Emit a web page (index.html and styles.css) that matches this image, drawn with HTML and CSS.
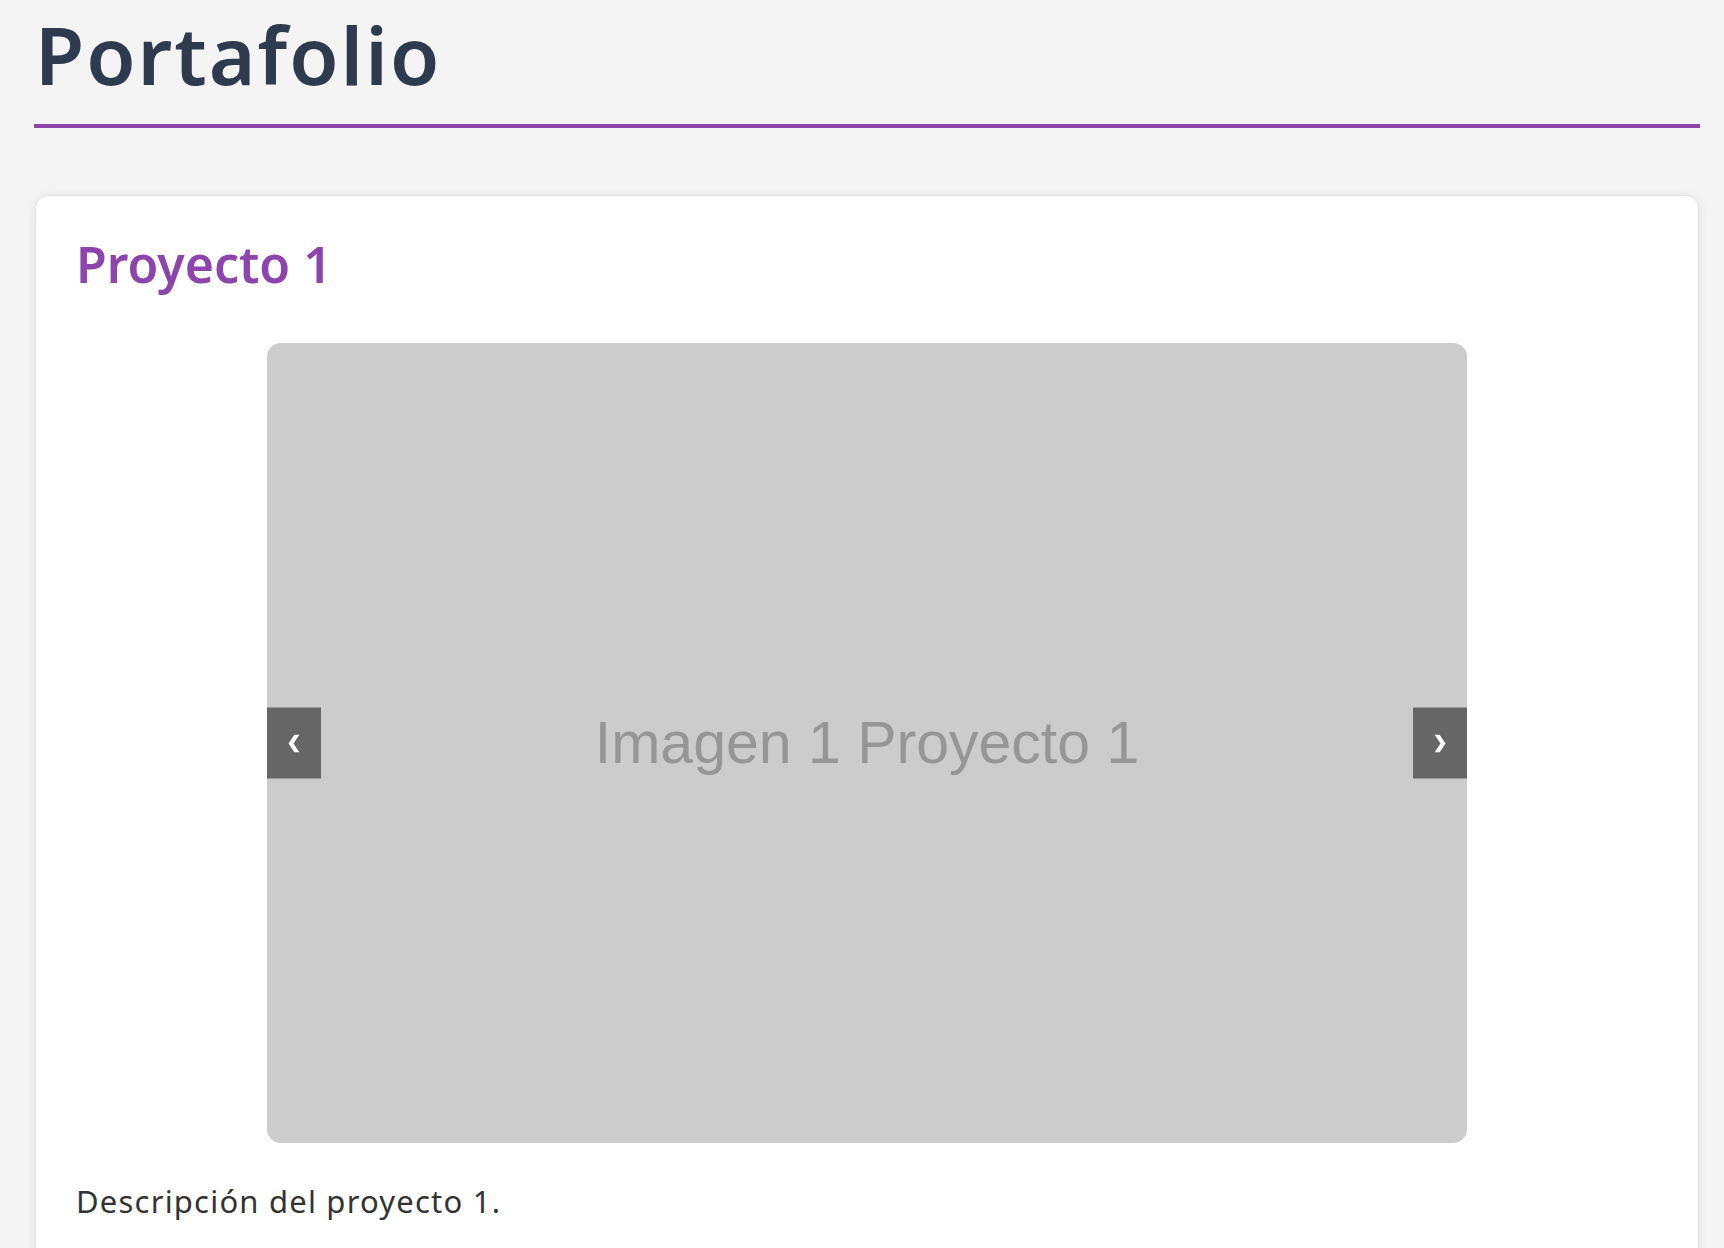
FILE: index.html
```html
<!DOCTYPE html>
<html lang="es">
<head>
<meta charset="utf-8">
<title>Portafolio</title>
<link rel="stylesheet" href="styles.css">
</head>
<body>
<main class="page">
  <header class="page-header">
    <h1 class="page-title">Portafolio</h1>
  </header>
  <section class="project-card">
    <h2 class="project-title">Proyecto 1</h2>
    <div class="carousel">
      <div class="slide"><span class="slide-text">Imagen 1 Proyecto 1</span></div>
      <button class="nav nav-prev" aria-label="Anterior">
        <svg width="12" height="18" viewBox="0 0 12 18"><polygon points="6.5,0 11.5,0 5.5,9 11.5,18 6.5,18 0.5,9" fill="#fff"/></svg>
      </button>
      <button class="nav nav-next" aria-label="Siguiente">
        <svg width="12" height="18" viewBox="0 0 12 18"><polygon points="0.5,0 5.5,0 11.5,9 5.5,18 0.5,18 6.5,9" fill="#fff"/></svg>
      </button>
    </div>
    <p class="project-desc">Descripción del proyecto 1.</p>
  </section>
</main>
</body>
</html>
```

FILE: styles.css
```css
* { box-sizing: border-box; }
html, body { margin: 0; padding: 0; }
body {
  background: #f4f4f4;
  font-family: "Noto Sans", "DejaVu Sans", sans-serif;
  overflow: hidden;
  height: 1248px;
}
.page {
  padding: 0 24px 0 34px;
}
.page-header {
  border-bottom: 4px solid #8e44ad;
  padding-top: 8px;
  padding-bottom: 24px;
}
.page-title {
  margin: 0;
  padding-left: 1px;
  font-size: 80px;
  line-height: 1.15;
  font-weight: 600;
  color: #2e3a4d;
  letter-spacing: 2px;
}
.project-card {
  margin: 67px 1px 0 1px;
  background: #fff;
  border: 1px solid #e2e2e2;
  border-radius: 13px;
  box-shadow: 0 2px 12px rgba(0,0,0,0.08);
  padding: 38px 40px 60px 40px;
}
.project-title {
  margin: 0 0 49px 0;
  font-size: 50px;
  line-height: 1.2;
  font-weight: 600;
  color: #8e44ad;
  padding-left: 0;
}
.carousel {
  position: relative;
  width: 1200px;
  height: 800px;
  margin: 0 auto;
}
.slide {
  width: 100%;
  height: 100%;
  background: #cccccc;
  border-radius: 14px;
  display: flex;
  align-items: center;
  justify-content: center;
}
.slide-text {
  font-family: "Liberation Sans", Arial, sans-serif;
  font-size: 59px;
  color: #969696;
  filter: blur(0.7px);
}
.nav {
  position: absolute;
  top: 50%;
  transform: translateY(-50%);
  width: 54px;
  height: 71px;
  background: #666;
  border: 0;
  padding: 0;
  display: flex;
  align-items: center;
  justify-content: center;
}
.nav-prev { left: 0; }
.nav-next { right: 0; }
.project-desc {
  margin: 37px 0 0 0;
  font-size: 31px;
  line-height: 1.4;
  color: #333;
  letter-spacing: 1.2px;
}
```
